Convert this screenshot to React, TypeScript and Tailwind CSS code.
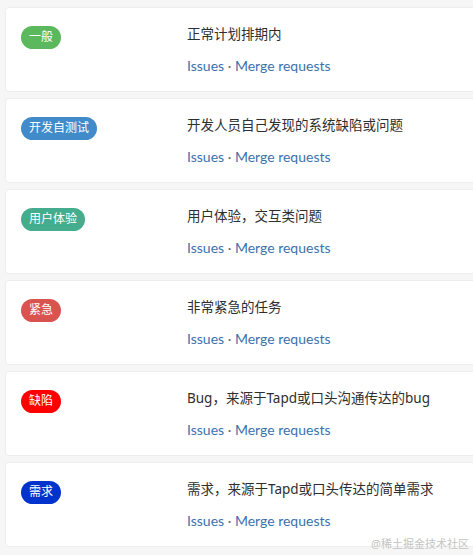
import React from "react";

interface Label {
  name: string;
  color: string;
  desc: string;
}

const labels: Label[] = [
  { name: "一般", color: "bg-[#5cb85c]", desc: "正常计划排期内" },
  { name: "开发自测试", color: "bg-[#428bca]", desc: "开发人员自己发现的系统缺陷或问题" },
  { name: "用户体验", color: "bg-[#44ad8e]", desc: "用户体验，交互类问题" },
  { name: "紧急", color: "bg-[#d9534f]", desc: "非常紧急的任务" },
  { name: "缺陷", color: "bg-[#ff0000]", desc: "Bug，来源于Tapd或口头沟通传达的bug" },
  { name: "需求", color: "bg-[#0033cc]", desc: "需求，来源于Tapd或口头传达的简单需求" },
];

const LabelRow: React.FC<{ label: Label }> = ({ label }) => (
  <div className="flex h-[85px] w-[520px] shrink-0 rounded-[4px] border border-[#eeeeee] bg-white">
    {/* badge column */}
    <div className="w-[181px] shrink-0 pl-[15px] pt-[15px]">
      <span
        className={
          label.color +
          " inline-flex h-[23px] items-center rounded-full px-2 text-[12px] leading-none text-white"
        }
      >
        {label.name}
      </span>
    </div>

    {/* description + links */}
    <div className="pt-[16px]">
      <div className="text-[13.5px] leading-[20px] text-[#2e2e2e]">{label.desc}</div>
      <div className="mt-[12px] font-['Lato',sans-serif] text-[14px] leading-[20px] text-[#3a72ad]">
        <a className="hover:underline">Issues</a>
        <span className="text-[#707070]"> · </span>
        <a className="hover:underline">Merge requests</a>
      </div>
    </div>
  </div>
);

export default function App() {
  return (
    <div
      className="relative h-[555px] w-full overflow-hidden bg-[#f6f6f6]"
      style={{ fontFamily: '"Noto Sans", "Noto Sans CJK SC", sans-serif' }}
    >
      <div className="flex flex-col gap-[6px] pl-[5px] pt-[7px]">
        {labels.map((l) => (
          <LabelRow key={l.name} label={l} />
        ))}
      </div>

      {/* watermark */}
      <div className="absolute bottom-[3px] right-[4px] text-[11px] text-[#c4c4c4]">
        @稀土掘金技术社区
      </div>
    </div>
  );
}
